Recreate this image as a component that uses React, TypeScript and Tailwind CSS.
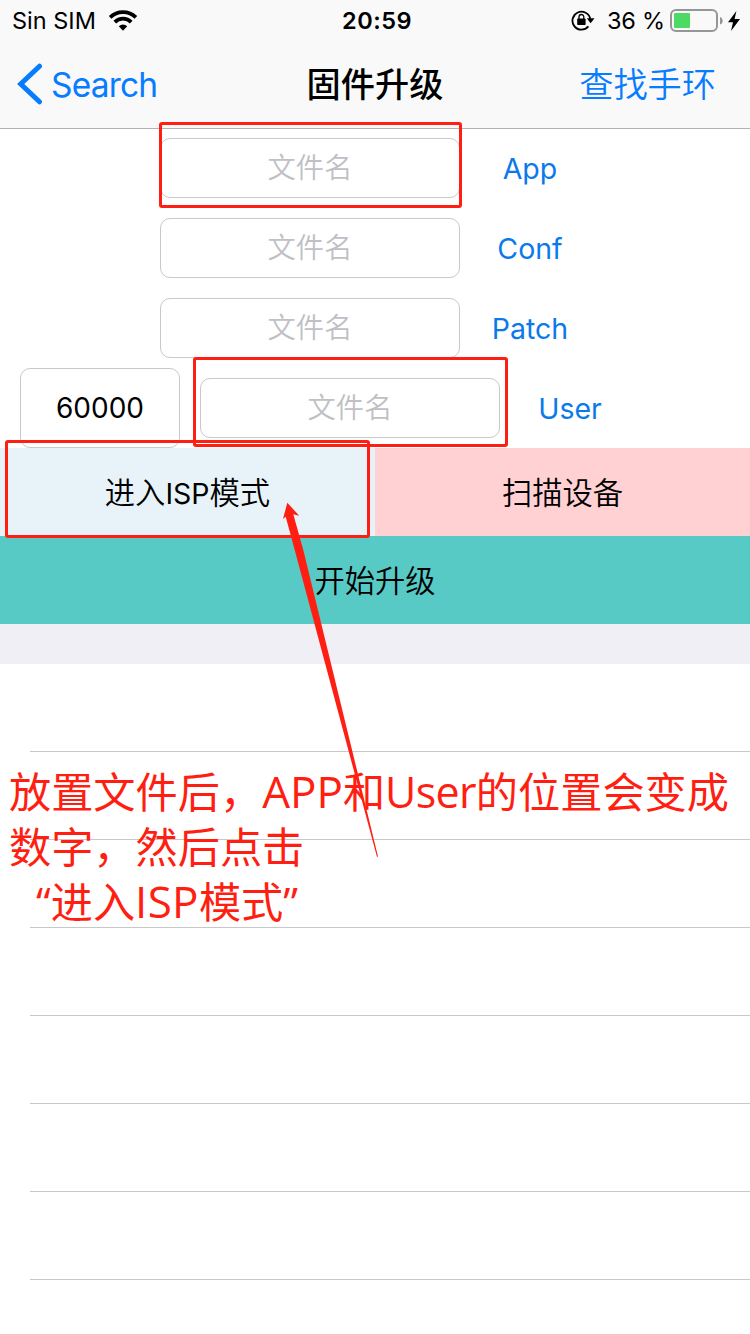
import React from "react";

function WifiIcon() {
  return (
    <svg className="h-[22px] w-[30px]" viewBox="0 0 30 22" fill="none" stroke="#000" strokeWidth="3.7">
      <path d="M2.1 7.4a18.2 18.2 0 0 1 25.8 0" />
      <path d="M6.8 12.1a11.6 11.6 0 0 1 16.4 0" />
      <path d="M10.8 16.2a6 6 0 0 1 8.4 0L15 20.7z" fill="#000" stroke="none" />
    </svg>
  );
}

function RotationLockIcon() {
  return (
    <svg className="h-[22px] w-[24px]" viewBox="0 0 24 22" fill="none" stroke="#000">
      <path d="M17.4 16.4A9 9 0 1 1 19.3 9" strokeWidth="1.8" />
      <path d="M15.8 8.3h7.7l-3.9 4.9z" fill="#000" stroke="none" />
      <rect x="6.2" y="8.4" width="8.4" height="6.6" rx="0.8" fill="#000" stroke="none" />
      <path d="M8 9V6.9a2.4 2.4 0 0 1 4.8 0V9" strokeWidth="1.3" />
    </svg>
  );
}

function BatteryIcon() {
  return (
    <svg className="h-[24px] w-[54px]" viewBox="0 0 54 24">
      <rect x="1" y="1" width="46" height="21" rx="5" fill="none" stroke="#969698" strokeWidth="2" />
      <rect x="4" y="4" width="16" height="15" rx="1" fill="#4cd964" />
      <path d="M50 8c3.6 1 3.6 6.6 0 7.6z" fill="#969698" />
    </svg>
  );
}

function FileField() {
  return (
    <div className="flex h-[60px] w-[300px] shrink-0 items-center justify-center rounded-[10px] border border-[#c9c9cb] bg-white text-[28.3px] font-[350] text-[#bfbfc5]">
      <span>文件名</span>
    </div>
  );
}

function FieldLabel({ label }: { label: string }) {
  return <div className="w-[140px] pt-[2px] text-center text-[28.5px] font-[380] text-[#0a7aeb]">{label}</div>;
}

function FileRow({ label }: { label: string }) {
  return (
    <div className="flex h-20 items-center pl-40">
      <FileField />
      <FieldLabel label={label} />
    </div>
  );
}

const rows = [0, 1, 2, 3, 4, 5, 6];

export default function App() {
  return (
    <div className="relative h-[1334px] w-[750px] overflow-hidden bg-white font-[Inter,'Noto_Sans_CJK_SC',sans-serif] text-black">
      <header className="h-[129px] border-b border-[#b2b2b2] bg-[#f9f9f9]">
        <div className="grid h-[41px] grid-cols-[1fr_auto_1fr] items-center text-[24px]">
          <div className="flex items-center pl-3">
            <span className="w-[85px] whitespace-nowrap text-[23.5px] font-[380]">Sin SIM</span>
            <span className="ml-[11px]"><WifiIcon /></span>
          </div>
          <div className="pl-[4px] text-[23.5px] font-semibold tracking-[0.5px]">20:59</div>
          <div className="flex items-center justify-end pr-[10px]">
            <RotationLockIcon />
            <span className="ml-[12px] w-[63px] whitespace-nowrap text-[23.5px] font-[380] tracking-[-0.2px]">36 %</span>
            <BatteryIcon />
            <svg className="ml-[4px] h-[20px] w-[12px]" viewBox="0 0 12 20">
              <path d="M8.4 0L0 11.2h5L3 20l9-12H6.6z" />
            </svg>
          </div>
        </div>
        <div className="grid h-[87px] grid-cols-[1fr_auto_1fr] items-center text-[34.2px]">
          <div className="flex items-center pl-4 text-[#087cff]">
            <svg className="h-[44px] w-[28px]" viewBox="0 0 28 44" fill="none" stroke="currentColor" strokeWidth="5" strokeLinecap="round" strokeLinejoin="miter">
              <path d="M23.5 3.2L4.7 21l18.8 17.8" />
            </svg>
            <span className="ml-[7px] pt-px text-[33.5px] font-[380] tracking-[-0.8px]">Search</span>
          </div>
          <h1 className="font-medium">固件升级</h1>
          <div className="pr-[34px] text-right font-[350] text-[#087cff]">查找手环</div>
        </div>
      </header>

      <section className="-mt-px flex flex-col">
        <FileRow label="App" />
        <FileRow label="Conf" />
        <FileRow label="Patch" />
        <div className="flex h-20 items-center pl-5">
          <div className="mr-5 flex h-20 w-40 items-center justify-center rounded-[10px] border border-[#c9c9cb] text-[28px] font-[380]">
            60000
          </div>
          <FileField />
          <FieldLabel label="User" />
        </div>
      </section>

      <div className="grid h-[88px] grid-cols-2 text-[30.3px] font-[350]">
        <div className="flex items-center justify-center bg-[#e7f3f8] pt-[3px]">
          <span>进入<span className="text-[28.5px] font-[380]">ISP</span>模式</span>
        </div>
        <div className="flex items-center justify-center bg-[#ffd1d3] pt-[3px]">扫描设备</div>
      </div>
      <div className="flex h-[88px] items-center justify-center bg-[#58cac5] pt-[3px] text-[30.3px] font-[350]">
        开始升级
      </div>
      <div className="h-10 bg-[#efeff5]" />
      <div className="pl-[30px]">
        {rows.map((row) => (
          <div key={row} className="h-[88px] border-b border-[#c8c7cc]" />
        ))}
      </div>

      <div className="absolute left-[159px] top-[122px] h-[86px] w-[303px] rounded-[3px] border-3 border-[#ff1f12]" />
      <div className="absolute left-[193px] top-[357px] h-[90px] w-[315px] rounded-[3px] border-3 border-[#ff1f12]" />
      <div className="absolute left-[5px] top-[440px] h-[98px] w-[365px] rounded-[3px] border-3 border-[#ff1f12]" />

      <div className="absolute left-[9px] top-[764px] whitespace-nowrap font-['Open_Sans','Noto_Sans_CJK_SC',sans-serif] text-[42.2px] leading-[55px] text-[#ff1f12]">
        <div>放置文件后，<span className="text-[44px]">APP</span>和<span className="text-[43px] tracking-[-0.7px]">User</span>的位置会变成</div>
        <div>数字，然后点击</div>
        <div className="pl-[27px]">“进入<span className="text-[44px] tracking-[0.3px]">ISP</span>模式”</div>
      </div>

      <svg className="absolute left-0 top-0 h-[1334px] w-[750px]" viewBox="0 0 750 1334">
        <path d="M287.3 502.7L299.2 515.7L293.3 514.3L303.3 550L378 856.5L377 857L294.7 550L285.7 516.7L283 519z" fill="#ff1f12" />
      </svg>
    </div>
  );
}
